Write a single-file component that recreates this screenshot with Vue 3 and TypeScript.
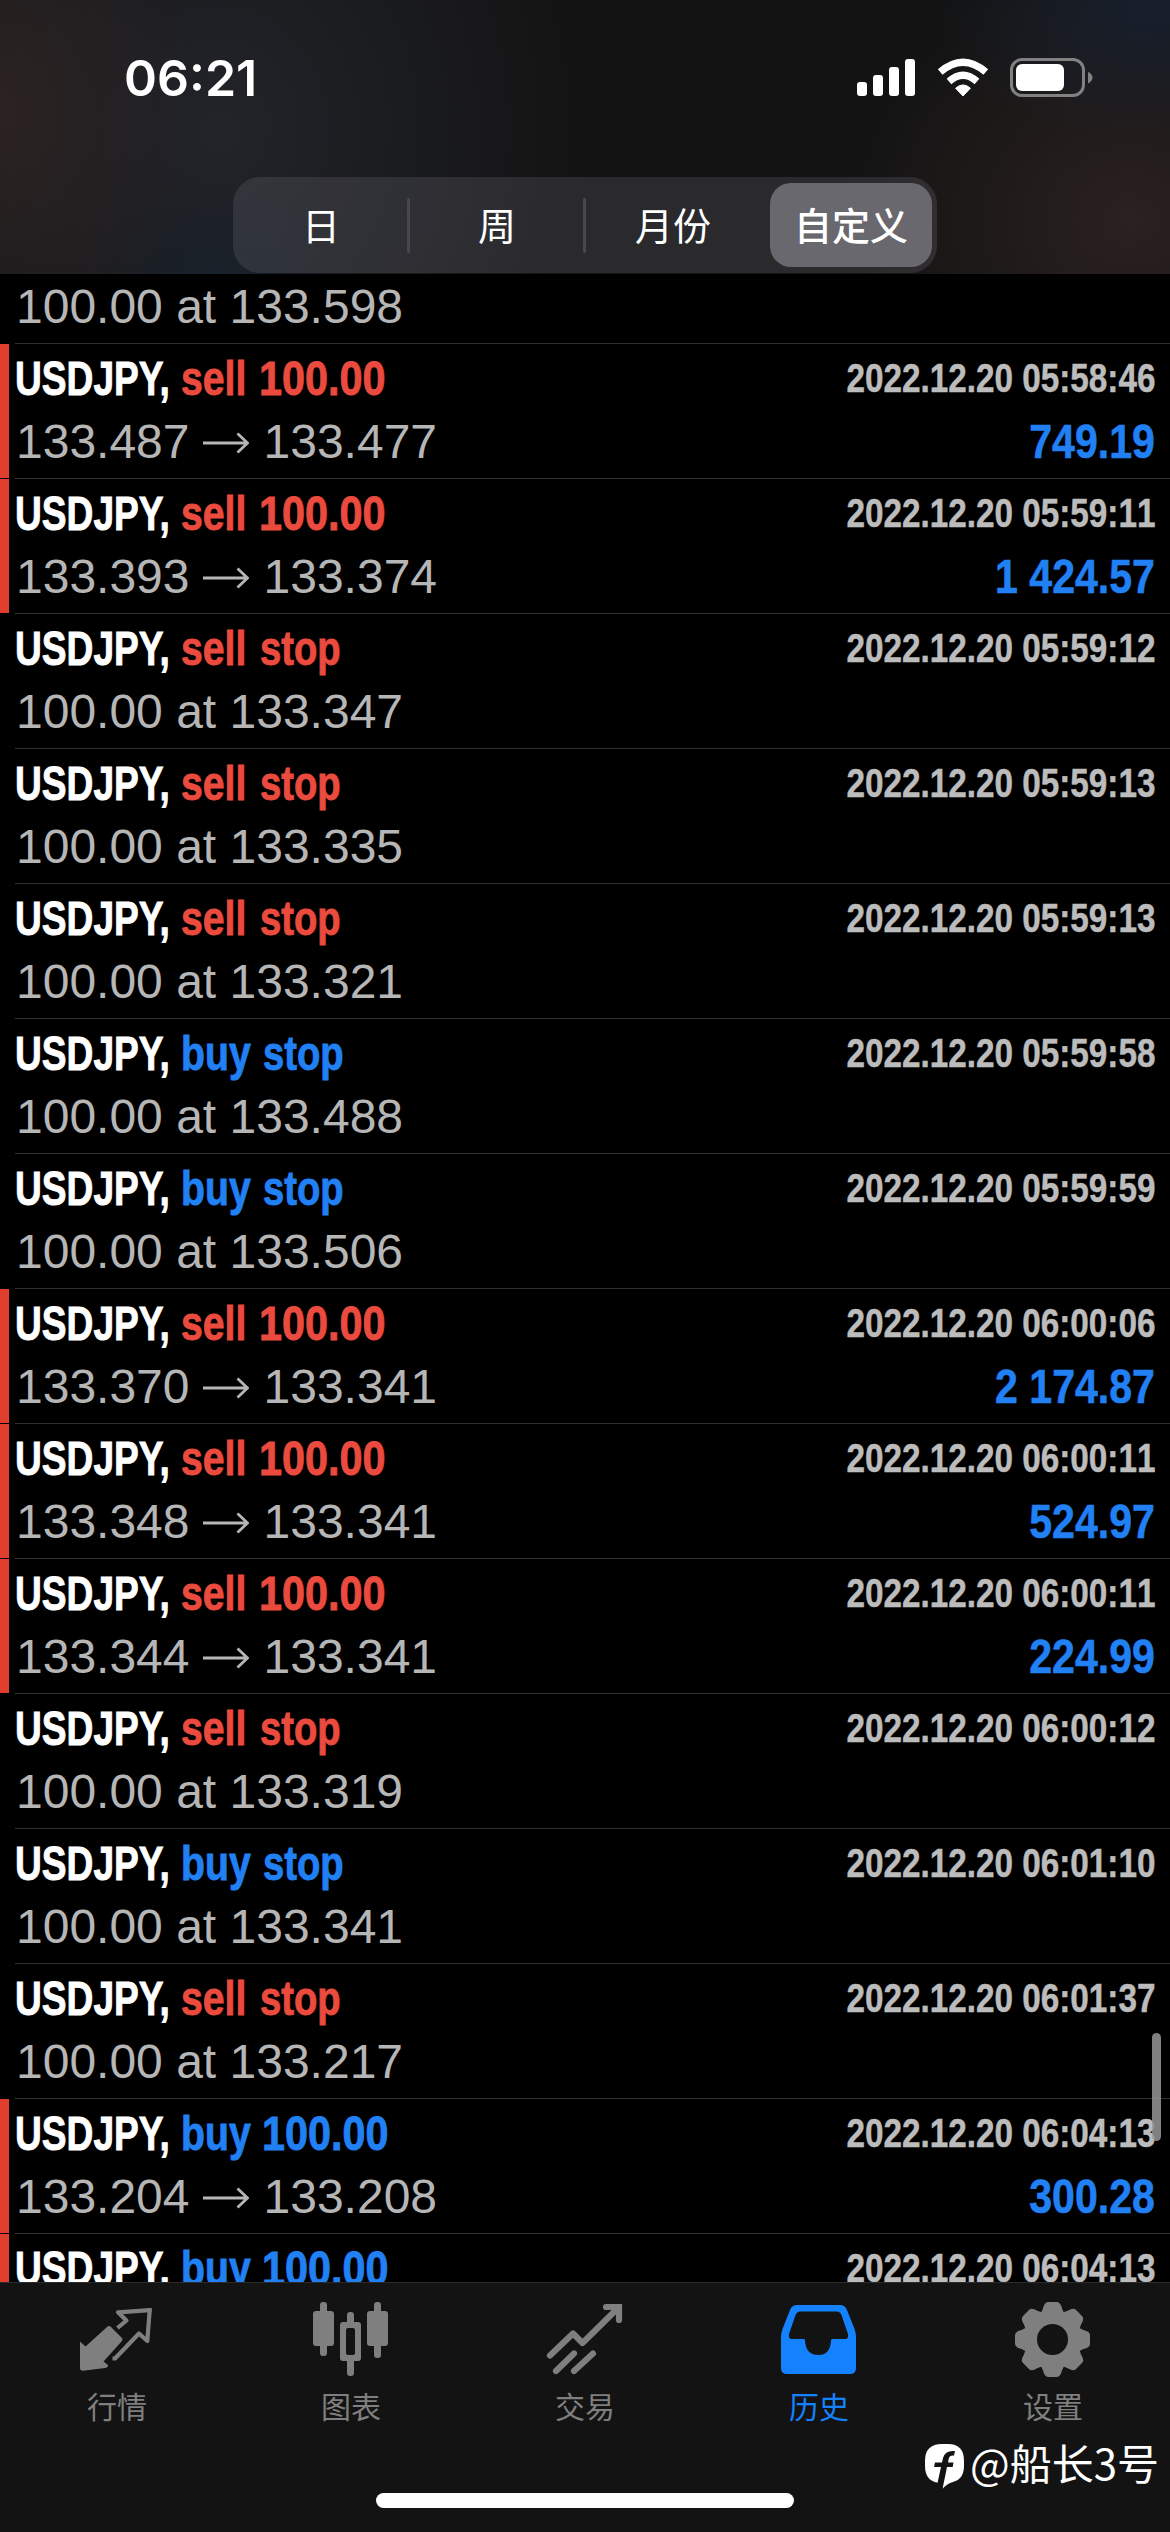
<script setup lang="ts">
interface Deal {
  side: 'sell' | 'buy'
  label: string
  time: string
  open: string
  close?: string
  profit?: string
}

const order = (side: 'sell' | 'buy', price: string, time: string): Deal => ({
  side,
  label: 'stop',
  time: `2022.12.20 ${time}`,
  open: `100.00 at ${price}`,
})

const trade = (side: 'sell' | 'buy', open: string, close: string, profit: string, time: string): Deal => ({
  side,
  label: '100.00',
  time: `2022.12.20 ${time}`,
  open,
  close,
  profit,
})

const deals: Deal[] = [
  trade('sell', '133.487', '133.477', '749.19', '05:58:46'),
  trade('sell', '133.393', '133.374', '1 424.57', '05:59:11'),
  order('sell', '133.347', '05:59:12'),
  order('sell', '133.335', '05:59:13'),
  order('sell', '133.321', '05:59:13'),
  order('buy', '133.488', '05:59:58'),
  order('buy', '133.506', '05:59:59'),
  trade('sell', '133.370', '133.341', '2 174.87', '06:00:06'),
  trade('sell', '133.348', '133.341', '524.97', '06:00:11'),
  trade('sell', '133.344', '133.341', '224.99', '06:00:11'),
  order('sell', '133.319', '06:00:12'),
  order('buy', '133.341', '06:01:10'),
  order('sell', '133.217', '06:01:37'),
  trade('buy', '133.204', '133.208', '300.28', '06:04:13'),
  trade('buy', '133.204', '133.208', '300.28', '06:04:13'),
]

const periods = ['日', '周', '月份', '自定义']
const activePeriod = 3
</script>

<template>
  <div class="screen">
    <header class="top">
      <div class="status">
        <span class="clock">06:21</span>
        <svg class="indicators" width="240" height="44" viewBox="0 0 240 44">
          <g fill="#fff">
            <rect x="6" y="26" width="10" height="14" rx="3" />
            <rect x="22" y="19" width="10" height="21" rx="3" />
            <rect x="38" y="11" width="10" height="29" rx="3" />
            <rect x="54" y="3" width="10" height="37" rx="3" />
            <path d="M112 40 L104.600 32.200 Q112 25.600 119.400 32.200 Z" stroke="#fff" stroke-width="1" stroke-linejoin="round" />
          </g>
          <g fill="none" stroke="#fff" stroke-width="7.200">
            <path d="M98 25.500 Q112 13 126 25.500" />
            <path d="M89.200 16 Q112 -3.500 134.800 16" />
          </g>
          <rect x="160.500" y="3.500" width="72" height="36" rx="10.500" fill="none" stroke="#818181" stroke-width="3" />
          <rect x="165" y="8" width="48" height="27" rx="6" fill="#fff" />
          <path d="M237 16 Q241.500 18 241.500 21.500 Q241.500 25 237 27.500 Z" fill="#818181" />
        </svg>
      </div>
      <nav class="segments">
        <button v-for="(p, i) in periods" :key="p" :class="['segment', { active: i === activePeriod, ruled: i < 2 }]">
          <span>{{ p }}</span>
        </button>
      </nav>
    </header>

    <main class="list">
      <div class="row clipped">
        <i class="bar" />
        <div class="body">
          <div class="line second"><span class="price">100.00 at 133.598</span></div>
        </div>
      </div>
      <div v-for="(d, i) in deals" :key="i" class="row">
        <i :class="['bar', { red: d.close }]" />
        <div class="body">
          <div class="line first">
            <span class="symbol">USDJPY,</span>
            <span :class="['action', d.side]">{{ d.side }}</span>
            <span :class="['amount', d.side, { word: !d.close }]">{{ d.label }}</span>
            <time class="stamp">{{ d.time }}</time>
          </div>
          <div class="line second">
            <span class="price">{{ d.open }}</span>
            <template v-if="d.close">
              <svg class="arrow" width="46" height="22" viewBox="0 0 46 22">
                <path d="M0 11 H44.500 M34.500 1.500 L44.500 11 L34.500 20.500" />
              </svg>
              <span class="price">{{ d.close }}</span>
            </template>
            <span v-if="d.profit" class="profit">{{ d.profit }}</span>
          </div>
        </div>
      </div>
      <i class="scrollbar" />
    </main>

    <footer class="tabbar">
      <div class="tabs">
        <div class="tab">
          <svg width="78" height="78" viewBox="0 0 78 78">
            <path d="M2 39.500 L7.500 44.500 L29 25 Q31 23 33 25 L43.500 35.500 Q45.500 37.500 43.500 39.500 L25.500 59.500 L30 63 Q30 65.500 27 66 L5 68.700 Q2 68.700 2 66 Z" fill="currentColor" />
            <path d="M39.500 26 L48.500 18.500 L40 10.300 L71.700 8.200 L69.300 39 L61 31.500 L37 56.500 H34.500" fill="none" stroke="currentColor" stroke-width="4.200" stroke-linejoin="round" />
            <path d="M69 6.300 L73.800 6 L73.400 11 Z" fill="currentColor" />
          </svg>
          <span>行情</span>
        </div>
        <div class="tab">
          <svg width="78" height="78" viewBox="0 0 78 78" fill="currentColor">
            <rect x="1" y="9" width="21" height="35" rx="3" />
            <rect x="8" y="0" width="7" height="54" rx="3" />
            <rect x="55" y="9" width="21" height="35" rx="3" />
            <rect x="62" y="0" width="7" height="56" rx="3" />
            <path fill-rule="evenodd" d="M31 20 H46 Q49 20 49 23 V56 Q49 59 46 59 H31 Q28 59 28 56 V23 Q28 20 31 20 Z M36 26 Q34 26 34 28 V51 Q34 53 36 53 H41 Q43 53 43 51 V28 Q43 26 41 26 Z" />
            <rect x="35" y="10" width="7" height="14" rx="3" />
            <rect x="35" y="56" width="7" height="18" rx="3" />
          </svg>
          <span>图表</span>
        </div>
        <div class="tab">
          <svg width="78" height="78" viewBox="0 0 78 78" fill="none" stroke="currentColor" stroke-width="6.200" stroke-linecap="round">
            <path d="M4 53.500 L27 31.500 L36.500 41 L70 8" stroke-linejoin="round" />
            <path d="M60 5 H73 V18" stroke-linejoin="miter" />
            <path d="M10 69 L28 51.500 M28 69 L47 51.500" />
          </svg>
          <span>交易</span>
        </div>
        <div class="tab active">
          <svg width="78" height="78" viewBox="0 0 78 78">
            <path fill="currentColor" fill-rule="evenodd" d="M17 3 H60 Q65 3 67 8 L74.500 27 Q76 31 76 35 V66 Q76 72 70 72 H7 Q1 72 1 66 V35 Q1 31 2.500 27 L10 8 Q12 3 17 3 Z M20 9.500 Q17 9.500 15.500 13 L9 32 Q8 37 12 37 H24 Q25 37 25 39 Q26 53 38.500 53 Q50 53 51 39 Q51 37 52 37 H65 Q69 37 68 32 L61.500 13 Q60 9.500 57 9.500 Z" />
          </svg>
          <span>历史</span>
        </div>
        <div class="tab">
          <svg width="78" height="78" viewBox="0 0 78 78">
            <g fill="currentColor" transform="translate(38.500 37.500)">
              <path v-for="a in 8" :key="a" :transform="`rotate(${a * 45})`" d="M-14 -24 Q-10.500 -27.500 -9.500 -31 Q-8 -37.500 -4.500 -37.500 H4.500 Q8 -37.500 9.500 -31 Q10.500 -27.500 14 -24 Z" />
            </g>
            <circle cx="38.500" cy="37.500" r="22" fill="none" stroke="currentColor" stroke-width="13" />
          </svg>
          <span>设置</span>
        </div>
      </div>
      <div class="watermark">
        <svg width="42" height="48" viewBox="0 0 42 48">
          <path fill="#fff" d="M18 1 H24 Q40 1 40 18 V23 Q40 36 29 39 Q23 40.500 18.500 46 L19 40 H18 Q1 40 1 23 V18 Q1 1 18 1 Z" />
          <path fill="#131313" d="M31 8 L30 12.500 Q25.500 12 24.800 15.500 L24 19.500 H29.500 L28.700 24 H23 L18.500 46 L13.500 40 L17 24 H10 L11 19.500 H18 L19 15 Q21 7 31 8 Z" />
        </svg>
        <span>@船长3号</span>
      </div>
      <i class="home" />
    </footer>
  </div>
</template>

<style>
body {
  background: #000;
}
</style>

<style scoped>
.screen {
  width: 1170px;
  height: 2532px;
  display: flex;
  flex-direction: column;
  overflow: hidden;
  background: #000;
  font-family: 'Liberation Sans', 'Noto Sans CJK SC', sans-serif;
}

.top {
  flex: none;
  height: 274px;
  background:
    radial-gradient(ellipse 190px 290px at 0 110px, rgba(46, 36, 35, 0.9), transparent),
    radial-gradient(ellipse 130px 90px at 215px 274px, rgba(22, 34, 46, 0.6), transparent),
    radial-gradient(ellipse 370px 420px at 220px 130px, rgba(34, 36, 42, 1), transparent),
    radial-gradient(ellipse 220px 130px at 1150px 10px, rgba(24, 34, 50, 0.8), transparent),
    radial-gradient(ellipse 290px 260px at 1130px 220px, rgba(42, 33, 32, 1), transparent),
    #131313;
}
.status {
  height: 177px;
  padding: 56px 87px 0 124px;
  box-sizing: border-box;
  display: flex;
  justify-content: space-between;
  align-items: flex-start;
}
.clock {
  font: 600 50px/44px Inter, sans-serif;
  color: #fff;
}
.indicators {
  margin-right: -8px;
  overflow: visible;
}
.segments {
  margin: 0 auto;
  width: 704px;
  height: 96px;
  display: flex;
  border-radius: 27px;
  background: rgba(118, 118, 128, 0.24);
}
.segment {
  flex: 1;
  border: 0;
  padding: 0 0 3px;
  background: none;
  display: flex;
  align-items: center;
  justify-content: center;
  position: relative;
  color: #fff;
  font: 400 38px/54px 'Noto Sans CJK SC', sans-serif;
}
.segment.ruled::after {
  content: '';
  position: absolute;
  right: -1px;
  top: 21px;
  width: 3px;
  height: 55px;
  border-radius: 2px;
  background: #48484b;
}
.segment.active {
  flex: none;
  width: 162px;
  height: 84px;
  margin: 6px 5px 0 9px;
  border-radius: 21px;
  background: #69686e;
  font-weight: 500;
}

.list {
  flex: none;
  height: 2008px;
  overflow: hidden;
  position: relative;
  font-kerning: none;
}
.row {
  height: 135px;
  display: flex;
}
.clipped {
  height: 69px;
}
.bar {
  width: 9px;
  margin: 1px 6px 0 0;
}
.bar.red {
  background: #df3f2c;
}
.body {
  flex: 1;
  border-top: 1px solid #303030;
  padding: 0 15px 0 1px;
}
.clipped .body {
  border: 0;
}
.line {
  display: flex;
  align-items: center;
  white-space: nowrap;
}
.first {
  height: 60px;
  padding-top: 4px;
}
.second {
  height: 66px;
}
.clipped .second {
  height: 64px;
}
.symbol,
.action,
.amount,
.stamp,
.profit {
  font-weight: 700;
  transform-origin: 0 50%;
}
.symbol,
.action,
.amount {
  font-size: 49px;
  -webkit-text-stroke: 0.9px currentColor;
}
.symbol {
  width: 166px;
  margin-left: -1px;
  color: #fff;
  font-kerning: normal;
  transform: scaleX(0.758);
}
.action {
  width: 78px;
  transform: scaleX(0.8);
}
.action.buy {
  width: 81px;
}
.amount {
  transform: scaleX(0.845);
}
.amount.word {
  margin-left: 1px;
  transform: scaleX(0.78);
}
.sell {
  color: #ea4b3e;
}
.buy {
  color: #2180f3;
}
.stamp {
  margin-left: auto;
  font-size: 40px;
  color: #bcbcbc;
  -webkit-text-stroke: 0.5px currentColor;
  transform-origin: 100% 50%;
  transform: scaleX(0.832);
}
.price {
  font-size: 48px;
  color: #b6b6b6;
}
.arrow {
  margin: 3px 15px 0 13px;
  fill: none;
  stroke: #b6b6b6;
  stroke-width: 2.8px;
}
.profit {
  margin-left: auto;
  font-size: 48px;
  color: #2180f3;
  -webkit-text-stroke: 0.6px currentColor;
  transform-origin: 100% 50%;
  transform: scaleX(0.855);
}
.scrollbar {
  position: absolute;
  left: 1152px;
  top: 1759px;
  width: 9px;
  height: 108px;
  border-radius: 5px;
  background: rgba(150, 150, 150, 0.85);
}

.tabbar {
  height: 250px;
  box-sizing: border-box;
  border-top: 1px solid #2b2b2b;
  background: #131313;
  display: flex;
  flex-direction: column;
}
.tabs {
  display: flex;
  padding-top: 19px;
  height: 141px;
  box-sizing: border-box;
}
.tab {
  flex: 1;
  display: flex;
  flex-direction: column;
  align-items: center;
  color: #7f7f7f;
}
.tab svg {
  flex: none;
}
.tab span {
  margin-top: 3px;
  font: 400 30px/44px 'Noto Sans CJK SC', sans-serif;
}
.tab.active {
  color: #1482fe;
}
.watermark {
  height: 56px;
  margin-top: 10px;
  padding-right: 11px;
  display: flex;
  justify-content: flex-end;
  align-items: center;
  color: #fff;
  font: 400 42px/56px 'Noto Sans CJK SC', sans-serif;
}
.watermark svg {
  margin: 10px 4px 0 0;
}
.home {
  align-self: center;
  margin-top: 3px;
  width: 418px;
  height: 15px;
  border-radius: 8px;
  background: #fff;
}
</style>
